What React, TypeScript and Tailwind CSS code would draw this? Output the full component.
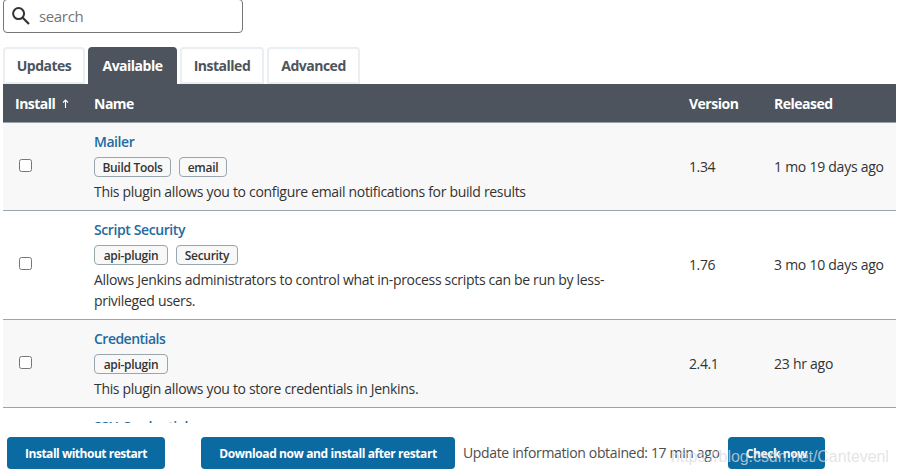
import React from "react";

type Plugin = {
  name: string;
  tags: { label: string; box: string }[];
  lines: string[];
  version: string;
  released: string;
  row: string;
  nameTrack: string;
  checkPad: string;
  cellPad: string;
};

const plugins: Plugin[] = [
  {
    name: "Mailer",
    nameTrack: "tracking-[-0.45px]",
    tags: [
      { label: "Build Tools", box: "w-[77px]" },
      { label: "email", box: "w-[48px]" },
    ],
    lines: ["This plugin allows you to configure email notifications for build results"],
    version: "1.34",
    released: "1 mo 19 days ago",
    row: "h-[88px] bg-[#f8f8f8]",
    checkPad: "pb-[2px]",
    cellPad: "pb-0",
  },
  {
    name: "Script Security",
    nameTrack: "tracking-[-0.4px]",
    tags: [
      { label: "api-plugin", box: "w-[74px]" },
      { label: "Security", box: "w-[62px]" },
    ],
    lines: [
      "Allows Jenkins administrators to control what in-process scripts can be run by less-",
      "privileged users.",
    ],
    version: "1.76",
    released: "3 mo 10 days ago",
    row: "h-[109px] bg-white",
    checkPad: "pb-1",
    cellPad: "pb-[2px]",
  },
  {
    name: "Credentials",
    nameTrack: "tracking-[-0.52px]",
    tags: [{ label: "api-plugin", box: "w-[74px]" }],
    lines: ["This plugin allows you to store credentials in Jenkins."],
    version: "2.4.1",
    released: "23 hr ago",
    row: "h-[88px] bg-[#f8f8f8]",
    checkPad: "pb-[2px]",
    cellPad: "pb-0",
  },
];

const columns = "grid grid-cols-[79px_595px_85px_134px]";

function Tab({ label, box, active }: { label: string; box: string; active?: boolean }) {
  const look = active
    ? "bg-[#4d545d] text-white border-[#4d545d]"
    : "bg-white text-[#4d545d] border-[#ebeff2]";
  return (
    <div className={`flex h-[37px] items-center justify-center rounded-t-[4px] border-2 text-[14px] font-bold tracking-[-0.5px] ${look} ${box}`}>
      {label}
    </div>
  );
}

function Button({ label, box }: { label: string; box: string }) {
  return (
    <button className={`flex h-8 shrink-0 items-center justify-center rounded-[4px] bg-[#0b6aa2] pt-px text-[12px] font-bold text-white ${box}`}>
      {label}
    </button>
  );
}

export default function App() {
  return (
    <div className="relative h-[475px] w-[897px] overflow-hidden whitespace-nowrap bg-white font-['Open_Sans','Noto_Sans',sans-serif] text-[14px] text-[#333]">
      <div className="ml-[3px] w-[893px]">
        <div className="-mt-px flex h-[34px] w-[240px] items-center rounded-[4px] border border-[#767676] pl-2 text-[#757575]">
          <svg className="h-[18px] w-[18px]" viewBox="0 0 18 18" fill="none" stroke="#333" strokeWidth="2">
            <circle cx="6.6" cy="6.6" r="5.5" />
            <path d="M10.7 10.7l6.3 6.3" strokeWidth="2.2" />
          </svg>
          <span className="ml-[9px] text-[15px] tracking-[-0.35px]">search</span>
        </div>
        <div className="mt-[14px] flex h-[37px]">
          <Tab label="Updates" box="w-[82px]" />
          <Tab label="Available" box="ml-[3px] w-[89px]" active />
          <Tab label="Installed" box="ml-[3px] w-[84px]" />
          <Tab label="Advanced" box="ml-[3px] w-[93px]" />
        </div>
        <div className={`${columns} h-[39px] items-center border-b border-[#98a2aa] bg-[#4d545d] text-[14px] font-bold tracking-[-0.5px] text-white`}>
          <div className="flex items-center pl-3">
            Install
            <svg className="ml-[7px] mt-px h-[9px] w-[7px]" viewBox="0 0 7 9" fill="none" stroke="#fff" strokeWidth="1.1">
              <path d="M3.5 9V1M1 3.5L3.5 1L6 3.5" />
            </svg>
          </div>
          <div className="pl-3">Name</div>
          <div className="pl-3">Version</div>
          <div className="pl-3">Released</div>
        </div>
        <div className="h-[300px] overflow-hidden">
          {plugins.map((p) => (
            <div key={p.name} className={`${columns} items-center border-b border-[#98a6ae] ${p.row}`}>
              <div className={`pl-4 ${p.checkPad}`}>
                <div className="h-[13px] w-[13px] rounded-[2.5px] border border-[#767676] bg-white" />
              </div>
              <div className="self-start pl-3 pt-2">
                <div className={`h-[21px] font-semibold leading-[21px] text-[#1f6a9f] ${p.nameTrack}`}>{p.name}</div>
                <div className="mt-[5px] flex h-5 gap-2">
                  {p.tags.map((t) => (
                    <span key={t.label} className={`flex items-center justify-center rounded-[4px] border border-[#98a6ae] bg-[#f8f8f8] pt-px text-[12px] font-semibold tracking-[-0.3px] ${t.box}`}>
                      {t.label}
                    </span>
                  ))}
                </div>
                <div className="mt-1 tracking-[-0.32px]">
                  {p.lines.map((l) => (
                    <div key={l} className="h-[21px] leading-[21px]">{l}</div>
                  ))}
                </div>
              </div>
              <div className={`pl-3 tracking-[-0.4px] ${p.cellPad}`}>{p.version}</div>
              <div className={`pl-3 tracking-[-0.25px] ${p.cellPad}`}>{p.released}</div>
            </div>
          ))}
          <div className={columns}>
            <div />
            <div className="pl-3 pt-[8px] font-semibold leading-[21px] tracking-[-0.4px] text-[#1f6a9f]">SSH Credentials</div>
          </div>
        </div>
        <div className="mt-[14px] flex h-8 items-center pl-1">
          <Button label="Install without restart" box="w-[158px] tracking-[-0.48px]" />
          <Button label="Download now and install after restart" box="ml-[36px] w-[254px] tracking-[-0.4px]" />
          <span className="ml-[8px] w-[265px] shrink-0 pb-[2px] tracking-[-0.35px] text-[#4d4d4d]">Update information obtained: 17 min ago</span>
          <Button label="Check now" box="w-[97px] tracking-[-0.4px]" />
        </div>
      </div>
      <div className="absolute left-[671px] top-[447px] font-['Liberation_Sans',sans-serif] text-[16px] leading-[20px] tracking-[-0.06px] text-[#dcdcdc]/75">
        https://blog.csdn.net/Cantevenl
      </div>
    </div>
  );
}
